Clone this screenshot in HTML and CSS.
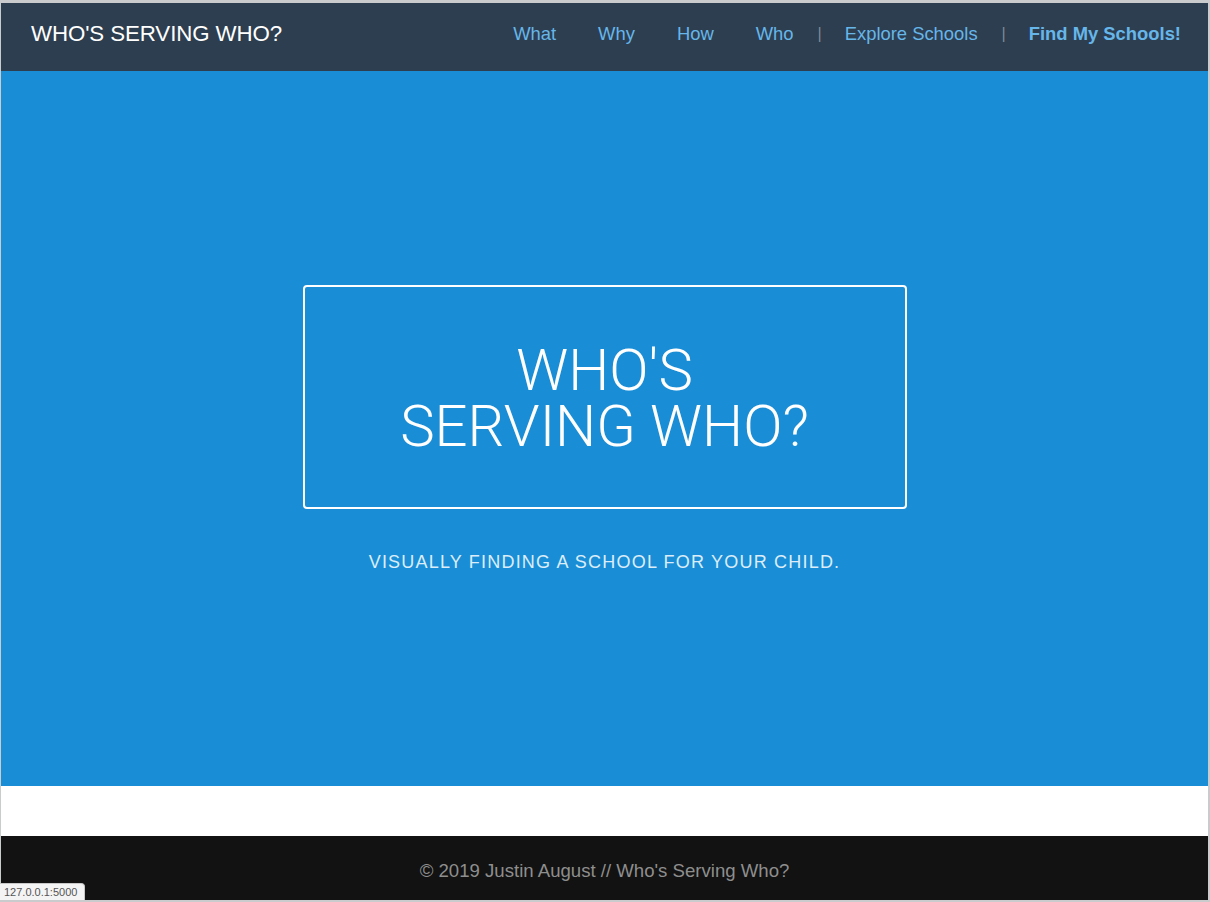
FILE: index.html
```html
<!DOCTYPE html>
<html lang="en">
<head>
<meta charset="utf-8">
<title>Who's Serving Who?</title>
<link rel="stylesheet" href="styles.css">
</head>
<body>
<div class="frame">
  <header class="navbar">
    <a class="brand" href="#">WHO'S SERVING WHO?</a>
    <nav class="nav">
      <a class="nav-link" href="#">What</a>
      <a class="nav-link" href="#">Why</a>
      <a class="nav-link" href="#">How</a>
      <a class="nav-link" href="#">Who</a>
      <span class="sep">|</span>
      <a class="nav-link" href="#">Explore Schools</a>
      <span class="sep">|</span>
      <a class="nav-link nav-strong" href="#">Find My Schools!</a>
    </nav>
  </header>
  <main class="hero">
    <div class="title-box">
      <h1 class="title">WHO'S<br>SERVING WHO?</h1>
    </div>
    <p class="subtitle">VISUALLY FINDING A SCHOOL FOR YOUR CHILD.</p>
  </main>
  <div class="spacer"></div>
  <footer class="footer">© 2019 Justin August // Who's Serving Who?</footer>
</div>
<div class="status">127.0.0.1:5000</div>
</body>
</html>
```

FILE: styles.css
```css
html, body {
  margin: 0;
  padding: 0;
  background: #c9cbcd;
}
body {
  font-family: "Liberation Sans", Arial, sans-serif;
}
.frame {
  padding: 3px 2px 2px 1px;
  display: flex;
  flex-direction: column;
  height: 902px;
  box-sizing: border-box;
}
.navbar {
  height: 68px;
  background: #2d3e50;
  display: flex;
  align-items: center;
  justify-content: space-between;
  padding: 0 27px 6px 30px;
  box-sizing: border-box;
  flex-shrink: 0;
}
.brand {
  color: #ffffff;
  font-size: 22.3px;
  text-decoration: none;
  letter-spacing: -0.1px;
}
.nav {
  display: flex;
  align-items: center;
  font-size: 18.4px;
}
.nav-link {
  color: #66b6ea;
  text-decoration: none;
  margin-left: 42px;
}
.nav-link:first-child {
  margin-left: 0;
}
.sep {
  color: #7d8a96;
  font-size: 16px;
  margin-left: 24px;
  margin-right: -19px;
}
.nav-strong {
  font-weight: bold;
}
.hero {
  height: 715px;
  background: #198dd6;
  display: flex;
  flex-direction: column;
  align-items: center;
  justify-content: center;
  flex-shrink: 0;
}
.title-box {
  width: 604px;
  height: 224px;
  box-sizing: border-box;
  border: 2px solid #ffffff;
  border-radius: 4px;
  display: flex;
  align-items: center;
  justify-content: center;
}
.title {
  margin: 0;
  color: #ffffff;
  font-family: Roboto, "Liberation Sans", sans-serif;
  font-weight: 300;
  font-size: 58px;
  line-height: 56px;
  text-align: center;
  padding-top: 2px;
}
.subtitle {
  margin: 43px 0 0;
  color: #dcedf9;
  font-size: 18px;
  letter-spacing: 1.2px;
}
.spacer {
  height: 50px;
  background: #ffffff;
  flex-shrink: 0;
}
.footer {
  flex: 1;
  background: #121212;
  color: #8e8e8e;
  font-size: 18.6px;
  display: flex;
  align-items: center;
  justify-content: center;
  padding-top: 6px;
}
.status {
  position: fixed;
  left: 0;
  bottom: 2px;
  background: #f4f4f4;
  color: #555555;
  font-size: 11px;
  padding: 2px 7px 2px 4px;
  border: 1px solid #c8c8c8;
  border-left: none;
  border-bottom: none;
  border-top-right-radius: 4px;
}
```
